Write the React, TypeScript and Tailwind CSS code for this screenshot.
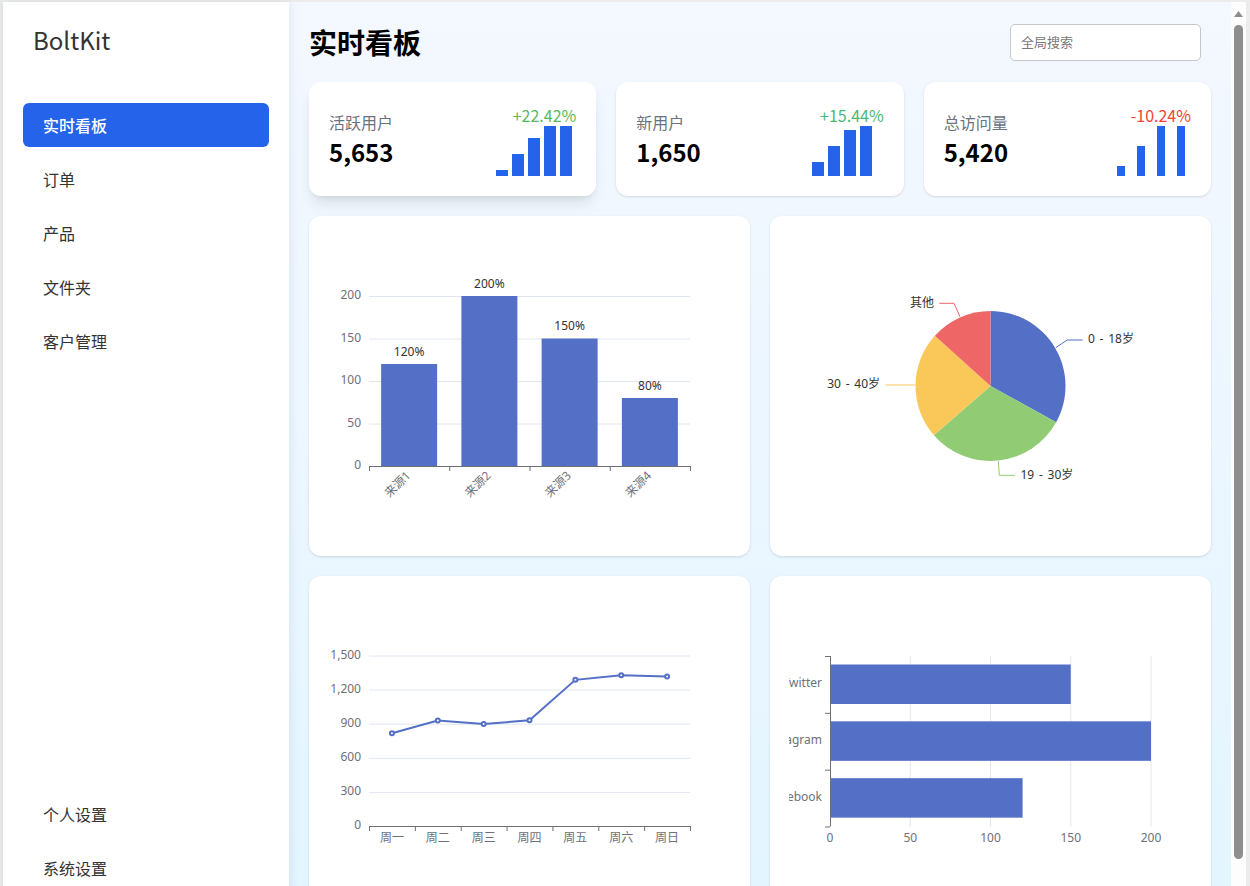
import React from "react"

const AXIS = "#6e7079"
const GRID = "#e0e6f1"
const BLUE = "#5470c6"

const STATS = [
  { label: "活跃用户", value: "5,653", change: "+22.42%", color: "text-[#5cb85c]", bars: [6, 22, 38, 50, 50], barClass: "w-3", gapClass: "gap-1 mr-1" },
  { label: "新用户", value: "1,650", change: "+15.44%", color: "text-[#4cb874]", bars: [14, 30, 46, 50], barClass: "w-3", gapClass: "gap-1 mr-3" },
  { label: "总访问量", value: "5,420", change: "-10.24%", color: "text-[#f44336]", bars: [10, 30, 50, 50], barClass: "w-2", gapClass: "gap-3 mr-1.5" },
]

const NAV_TOP = ["实时看板", "订单", "产品", "文件夹", "客户管理"]
const NAV_BOTTOM = ["个人设置", "系统设置"]

function ChartCard({ children }: { children: React.ReactNode }) {
  return (
    <div className="h-[340px] rounded-xl bg-white shadow-sm">
      <svg width="441" height="340" viewBox="0 0 441 340" className="block font-['Noto_Sans','Noto_Sans_CJK_SC',sans-serif]">
        {children}
      </svg>
    </div>
  )
}

function AxisText({ x, y, anchor = "middle", children, color = AXIS, transform, wordSpacing }: { x: number; y: number; anchor?: "start" | "middle" | "end"; children: React.ReactNode; color?: string; transform?: string; wordSpacing?: number }) {
  return (
    <text x={x} y={y} textAnchor={anchor} dominantBaseline="middle" fontSize="12" fill={color} transform={transform} wordSpacing={wordSpacing}>
      {children}
    </text>
  )
}

function SourceChart() {
  const band = 321 / 4
  const data = [
    { name: "来源1", value: 120 },
    { name: "来源2", value: 200 },
    { name: "来源3", value: 150 },
    { name: "来源4", value: 80 },
  ]
  return (
    <ChartCard>
      {[0, 50, 100, 150, 200].map((t) => {
        const y = 250.5 - t * 0.85
        return (
          <g key={t}>
            {t > 0 && <line x1="60" x2="381" y1={y} y2={y} stroke={GRID} />}
            <AxisText x={52} y={y - 0.5} anchor="end">{t}</AxisText>
          </g>
        )
      })}
      {data.map((d, i) => {
        const h = d.value * 0.85
        const cx = 60 + band * (i + 0.5)
        return (
          <g key={d.name}>
            <rect x={cx - 28} y={250 - h} width="56" height={h} fill={BLUE} />
            <AxisText x={cx} y={250 - h - 11.5} color="#333">{d.value}%</AxisText>
            <AxisText x={cx} y={258} anchor="end" transform={`rotate(-45 ${cx} 258)`}>{d.name}</AxisText>
          </g>
        )
      })}
      <line x1="60" x2="381" y1="250.5" y2="250.5" stroke={AXIS} />
      {[0, 1, 2, 3, 4].map((i) => (
        <line key={i} x1={60.5 + band * i} x2={60.5 + band * i} y1="250" y2="255" stroke={AXIS} />
      ))}
    </ChartCard>
  )
}

function AgeChart() {
  const cx = 220.5
  const cy = 170
  const r = 75
  const slices = [
    { value: 335, color: "#5470c6" },
    { value: 310, color: "#91cc75" },
    { value: 234, color: "#fac858" },
    { value: 135, color: "#ee6666" },
  ]
  const total = slices.reduce((s, x) => s + x.value, 0)
  let angle = 0
  const point = (a: number) => `${cx + r * Math.sin(a)} ${cy - r * Math.cos(a)}`
  return (
    <ChartCard>
      {slices.map((s) => {
        const start = angle
        angle += (s.value / total) * Math.PI * 2
        const large = angle - start > Math.PI ? 1 : 0
        return <path key={s.color} d={`M${cx} ${cy}L${point(start)}A${r} ${r} 0 ${large} 1 ${point(angle)}Z`} fill={s.color} />
      })}
      <polyline points="285.7,131.7 297.3,124 312.7,124" fill="none" stroke="#5470c6" />
      <polyline points="228.3,245 229.3,259.3 245,259.3" fill="none" stroke="#91cc75" />
      <polyline points="145.3,169 115.3,169" fill="none" stroke="#fac858" />
      <polyline points="190,100.7 184,87.3 169.3,87.3" fill="none" stroke="#ee6666" />
      <AxisText x={318} y={123.5} anchor="start" color="#333" wordSpacing={1.6}>0 - 18岁</AxisText>
      <AxisText x={250.5} y={259.5} anchor="start" color="#333" wordSpacing={1.6}>19 - 30岁</AxisText>
      <AxisText x={110} y={168.5} anchor="end" color="#333" wordSpacing={1.6}>30 - 40岁</AxisText>
      <AxisText x={164} y={87.5} anchor="end" color="#333">其他</AxisText>
    </ChartCard>
  )
}

function WeekChart() {
  const band = 321 / 7
  const days = ["周一", "周二", "周三", "周四", "周五", "周六", "周日"]
  const values = [820, 932, 901, 934, 1290, 1330, 1320]
  const px = (i: number) => 60 + band * (i + 0.5)
  const py = (v: number) => 250.5 - (v / 1500) * 170.5
  return (
    <ChartCard>
      {[0, 300, 600, 900, 1200, 1500].map((t) => (
        <g key={t}>
          {t > 0 && <line x1="60" x2="381" y1={py(t)} y2={py(t)} stroke={GRID} />}
          <AxisText x={52} y={py(t) - 0.5} anchor="end">{t.toLocaleString("en-US")}</AxisText>
        </g>
      ))}
      <line x1="60" x2="381" y1="250.5" y2="250.5" stroke={AXIS} />
      {days.map((d, i) => (
        <AxisText key={d} x={px(i)} y={262.5}>{d}</AxisText>
      ))}
      {Array.from({ length: 8 }, (_, i) => (
        <line key={i} x1={60.5 + band * i} x2={60.5 + band * i} y1="250" y2="255" stroke={AXIS} />
      ))}
      <polyline points={values.map((v, i) => `${px(i)},${py(v)}`).join(" ")} fill="none" stroke={BLUE} strokeWidth="2" />
      {values.map((v, i) => (
        <circle key={i} cx={px(i)} cy={py(v)} r="2" fill="#fff" stroke={BLUE} strokeWidth="2" />
      ))}
    </ChartCard>
  )
}

function SocialChart() {
  const rows = [
    { name: "Twitter", value: 150 },
    { name: "Instagram", value: 200 },
    { name: "Facebook", value: 120 },
  ]
  const band = 170.5 / 3
  const px = (v: number) => 60 + v * 1.605
  return (
    <ChartCard>
      <defs>
        <clipPath id="social-labels">
          <rect x="19" y="80" width="41" height="171" />
        </clipPath>
      </defs>
      {[0, 50, 100, 150, 200].map((t) => (
        <g key={t}>
          {t > 0 && <line x1={px(t)} x2={px(t)} y1="80" y2="250.5" stroke={GRID} />}
          <AxisText x={px(t)} y={262.5}>{t}</AxisText>
        </g>
      ))}
      {rows.map((r, i) => (
        <g key={r.name}>
          <rect x="60" y={80 + band * i + 8.5} width={px(r.value) - 60} height="39.5" fill={BLUE} />
          <g clipPath="url(#social-labels)">
            <AxisText x={52} y={80 + band * (i + 0.5) - 0.5} anchor="end">{r.name}</AxisText>
          </g>
        </g>
      ))}
      <line x1="60.5" x2="60.5" y1="80" y2="250.5" stroke={AXIS} />
      {[0, 1, 2, 3].map((i) => (
        <line key={i} x1="55" x2="60" y1={80.5 + band * i} y2={80.5 + band * i} stroke={AXIS} />
      ))}
    </ChartCard>
  )
}

function NavItem({ label, active }: { label: string; active?: boolean }) {
  return (
    <div className={`flex h-11 items-center rounded-md px-5 text-base ${active ? "bg-[#2563eb] font-medium text-white" : "text-[#333333]"}`}>
      {label}
    </div>
  )
}

export default function App() {
  return (
    <div className="flex h-[886px] w-[1250px] overflow-hidden bg-[#ececec] pl-[3px] pr-1 pt-0.5 font-['Noto_Sans_CJK_SC','Noto_Sans',sans-serif]">
      <aside className="z-10 flex h-[888px] w-[286px] shrink-0 flex-col justify-between bg-white px-5 shadow-[0_0_10px_rgba(120,140,170,0.2)]">
        <div>
          <div className="pl-2.5 pt-5 text-2xl leading-9 text-[#333333]">BoltKit</div>
          <nav className="mt-[45px] flex flex-col gap-2.5">
            {NAV_TOP.map((label, i) => (
              <NavItem key={label} label={label} active={i === 0} />
            ))}
          </nav>
        </div>
        <nav className="flex flex-col gap-2.5">
          {NAV_BOTTOM.map((label) => (
            <NavItem key={label} label={label} />
          ))}
        </nav>
      </aside>

      <main className="min-w-0 flex-1 overflow-hidden bg-linear-to-b from-[#f4f8ff] to-[#e3f5ff] pl-5 pr-5 pt-[22px]">
        <header className="mb-[21px] flex items-center justify-between">
          <h1 className="-mt-px mb-px text-[28px] font-bold leading-9 text-black">实时看板</h1>
          <input
            placeholder="全局搜索"
            className="mr-2.5 h-[37px] w-[191px] rounded-[5px] border border-[#c6c6c6] bg-white px-2.5 pb-0.5 text-[13px] placeholder:text-[#7a7a7a]"
          />
        </header>

        <section className="mb-5 grid grid-cols-3 gap-5">
          {STATS.map((s, i) => (
            <div key={s.label} className={`flex h-[114px] justify-between rounded-xl bg-white p-5 ${i === 0 ? "shadow-lg" : "shadow-sm"}`}>
              <div className="pt-2">
                <div className="text-base leading-6 text-[#6b7280]">{s.label}</div>
                <div className="mt-0.5 text-2xl font-bold leading-8 text-black">{s.value}</div>
              </div>
              <div className="flex flex-col items-end pt-[3px]">
                <div className={`text-base leading-5 ${s.color}`}>{s.change}</div>
                <div className={`mt-px flex h-[50px] items-end ${s.gapClass}`}>
                  {s.bars.map((h, j) => (
                    <div key={j} className={`bg-[#2563eb] ${s.barClass}`} style={{ height: h }} />
                  ))}
                </div>
              </div>
            </div>
          ))}
        </section>

        <section className="grid grid-cols-2 gap-5">
          <SourceChart />
          <AgeChart />
          <WeekChart />
          <SocialChart />
        </section>
      </main>

      <div className="flex w-[15px] shrink-0 flex-col items-start bg-[#fdfdfd] pl-[3px] pt-[9px]">
        <svg width="9" height="6" viewBox="0 0 9 6" className="block">
          <path d="M4.5 0L9 6H0Z" fill="#8e8e8e" />
        </svg>
        <div className="mt-2 h-[834px] w-[9px] rounded-full bg-[#8e8e8e]" />
      </div>
    </div>
  )
}
